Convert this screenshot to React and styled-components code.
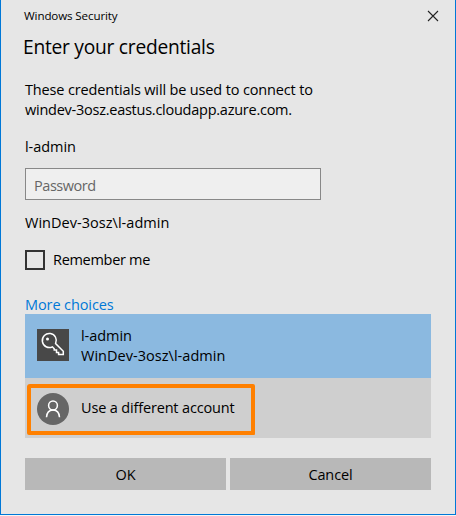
import React from "react";
import styled, { createGlobalStyle } from "styled-components";

const GlobalStyle = createGlobalStyle`
  * { box-sizing: border-box; }
  body { margin: 0; background: #f5f5f5; }
  button, input { font: inherit; color: inherit; border-radius: 0; }
`;

const Dialog = styled.main`
  display: flex;
  flex-direction: column;
  width: 456px;
  height: 515px;
  padding: 0 24px;
  border: 1px solid #0078d7;
  border-top: 0;
  background: #e6e6e6;
  color: #000;
  font: 14.5px/20px "Open Sans", "Noto Sans", sans-serif;
`;

const TitleBar = styled.header`
  display: flex;
  justify-content: space-between;
  height: 33px;
  margin: 0 -8px 0 -1px;
  padding-top: 6px;
  font-size: 11.6px;
`;

const CloseButton = styled.button`
  display: flex;
  width: 12px;
  height: 20px;
  padding: 4px 0 0;
  border: 0;
  background: none;
`;

const Heading = styled.h1`
  height: 28px;
  margin: 0 0 19px -2px;
  font-size: 19.2px;
  font-weight: 400;
  line-height: 28px;
`;

const Line = styled.div`
  height: 20px;
  white-space: pre;
`;

const Text = styled.span`
  white-space: pre;
  letter-spacing: ${(p) => p.$track || 0}px;
`;

const Message = styled.div`
  margin-bottom: 17px;
`;

const PasswordInput = styled.input`
  width: 296px;
  height: 32px;
  margin: 11px 0 13px;
  padding: 3px 8px 1px;
  border: 1px solid #888;
  outline: 0;
  background: #efefef;
  &::placeholder {
    color: #666;
    opacity: 1;
    letter-spacing: -0.45px;
  }
`;

const Remember = styled.label`
  display: flex;
  gap: 8px;
  height: 20px;
  margin-top: 17px;
`;

const CheckBox = styled.span`
  width: 20px;
  height: 20px;
  border: 2px solid #333;
`;

const MoreLink = styled.div`
  height: 19px;
  margin-top: 25px;
  color: #0078d7;
`;

const Account = styled.div`
  position: relative;
  display: flex;
  align-items: flex-start;
  gap: 12px;
  height: ${(p) => (p.$selected ? 64 : 60)}px;
  padding: ${(p) => (p.$selected ? 12 : 15)}px 12px 0;
  background: ${(p) => (p.$selected ? "#8bb9e0" : "#cfcfcf")};
`;

const Tile = styled.span`
  display: flex;
  width: 32px;
  height: 32px;
  margin-top: ${(p) => (p.$round ? 0 : 3)}px;
  border-radius: ${(p) => (p.$round ? "50%" : 0)};
  background: ${(p) => (p.$round ? "#666" : "#484848")};
`;

const AccountName = styled.div`
  padding-top: ${(p) => (p.$single ? 5 : 0)}px;
`;

const Highlight = styled.div`
  position: absolute;
  left: 2px;
  top: 6px;
  width: 228px;
  height: 51px;
  border: 4px solid #ff8000;
  border-radius: 3px 2px 1px 2px;
`;

const Actions = styled.footer`
  display: grid;
  grid-template-columns: 1fr 1fr;
  gap: 4px;
  margin-top: 20px;
`;

const ActionButton = styled.button`
  height: 32px;
  padding: 1px 0 0;
  border: 0;
  background: #b8b8b8;
`;

const CloseIcon = () => (
  <svg width="12" height="12" viewBox="0 0 12 12" stroke="#222" strokeWidth="1.1">
    <path d="M1 1 11 11M11 1 1 11" />
  </svg>
);

const KeyIcon = () => (
  <svg width="32" height="32" viewBox="0 0 32 32" fill="none" stroke="#fff" strokeWidth="1.5">
    <path d="M18.6 14.6A7 7 0 1 0 15.4 17.8L17.200 19.700V21H19.500V23.400H21.600V25.400H26.300V22.300Z" />
    <circle cx="10.5" cy="9.900" r="1.5" fill="#fff" stroke="none" />
  </svg>
);

const PersonIcon = () => (
  <svg width="32" height="32" viewBox="0 0 32 32" fill="none" stroke="#fff" strokeWidth="1.5">
    <circle cx="16" cy="12.500" r="4.400" />
    <path d="M9.500 24.200C9.800 19.800 12.200 17 16 17s6.200 2.800 6.500 7.200" />
  </svg>
);

export default function App() {
  return (
    <>
      <GlobalStyle />
      <Dialog>
        <TitleBar>
          <Text $track={-0.12}>Windows Security</Text>
          <CloseButton aria-label="Close"><CloseIcon /></CloseButton>
        </TitleBar>
        <Heading><Text $track={-0.25}>Enter your credentials</Text></Heading>
        <Message>
          <Line><Text $track={-0.15}>These credentials will be used to connect to</Text></Line>
          <Line><Text $track={-0.25}>windev-3osz.eastus.cloudapp.azure.com.</Text></Line>
        </Message>
        <Line><Text $track={-0.05}>l-admin</Text></Line>
        <PasswordInput type="password" placeholder="Password" />
        <Line><Text $track={0.03}>WinDev-3osz\l-admin</Text></Line>
        <Remember>
          <CheckBox />
          <Text $track={-0.3}>Remember me</Text>
        </Remember>
        <MoreLink><Text $track={-0.1}>More choices</Text></MoreLink>
        <Account $selected>
          <Tile><KeyIcon /></Tile>
          <AccountName>
            <Line><Text $track={-0.05}>l-admin</Text></Line>
            <Line><Text $track={0.03}>WinDev-3osz\l-admin</Text></Line>
          </AccountName>
        </Account>
        <Account>
          <Tile $round><PersonIcon /></Tile>
          <AccountName $single>
            <Line><Text $track={-0.16}>Use a different account</Text></Line>
          </AccountName>
          <Highlight />
        </Account>
        <Actions>
          <ActionButton><Text $track={-0.2}>OK</Text></ActionButton>
          <ActionButton><Text $track={-0.1}>Cancel</Text></ActionButton>
        </Actions>
      </Dialog>
    </>
  );
}
